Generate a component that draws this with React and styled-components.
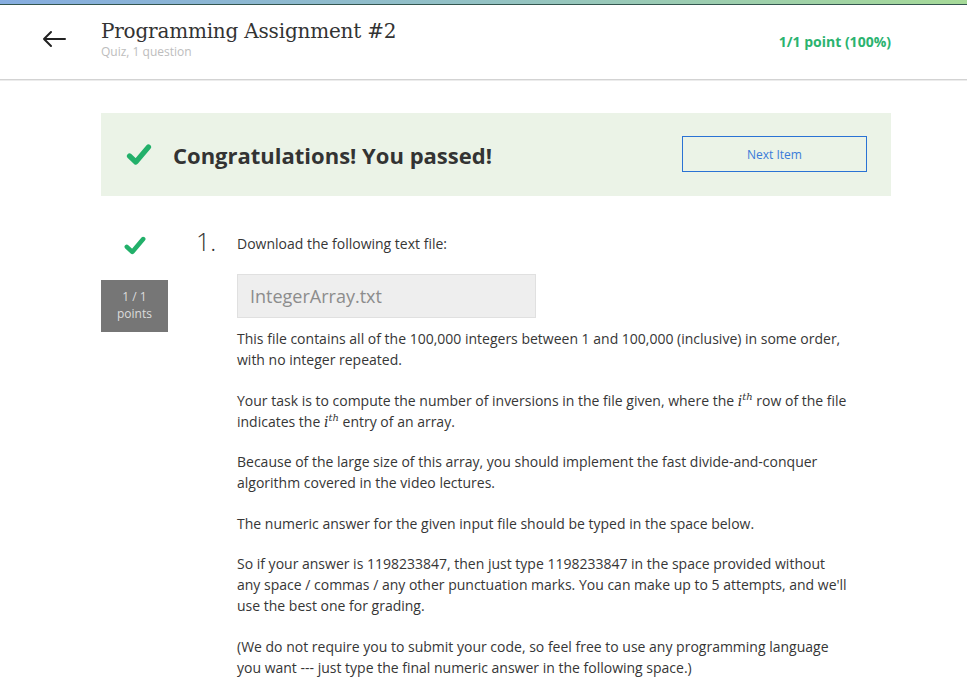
import styled, { createGlobalStyle } from "styled-components";

const GlobalStyle = createGlobalStyle`
  body {
    margin: 0;
    background: #fff;
    font-family: "Open Sans", "Liberation Sans", sans-serif;
    color: #333;
  }
`;

const CheckIcon = ({ width, height }) => (
  <svg width={width} height={height} viewBox="0 0 26 22" aria-hidden="true">
    <path
      d="M3.5 12.5 L9.8 18.5 L22.5 3.5"
      fill="none"
      stroke="#22b06a"
      strokeWidth="5.2"
      strokeLinecap="round"
      strokeLinejoin="round"
    />
  </svg>
);

const BackArrow = () => (
  <svg width="26" height="18" viewBox="0 0 26 18" aria-hidden="true">
    <path
      d="M24 9H3 M10 2 L3 9 L10 16"
      fill="none"
      stroke="#222"
      strokeWidth="2"
      strokeLinecap="round"
      strokeLinejoin="round"
    />
  </svg>
);

const Ith = () => (
  <MathI>
    i<sup>th</sup>
  </MathI>
);

const App = () => {
  return (
    <>
      <GlobalStyle />
      <TopBar />
      <Header>
        <BackButton aria-label="Back">
          <BackArrow />
        </BackButton>
        <TitleBlock>
          <Title>Programming Assignment #2</Title>
          <Subtitle>Quiz, 1 question</Subtitle>
        </TitleBlock>
        <Score>1/1 point (100%)</Score>
      </Header>

      <Main>
        <Banner>
          <CheckIcon width={26} height={23} />
          <BannerText>Congratulations! You passed!</BannerText>
          <NextButton>Next Item</NextButton>
        </Banner>

        <Question>
          <Status>
            <CheckIcon width={24} height={19} />
            <Points>
              1 / 1
              <br />
              points
            </Points>
          </Status>
          <Number>1.</Number>
          <Body>
            <Prompt>Download the following text file:</Prompt>
            <FileBox>IntegerArray.txt</FileBox>
            <Para>
              This file contains all of the 100,000 integers between 1 and
              100,000 (inclusive) in some order, with no integer repeated.
            </Para>
            <Para>
              Your task is to compute the number of inversions in the file
              given, where the <Ith /> row of the file indicates the <Ith />{" "}
              entry of an array.
            </Para>
            <Para>
              Because of the large size of this array, you should implement the
              fast divide-and-conquer algorithm covered in the video lectures.
            </Para>
            <Para>
              The numeric answer for the given input file should be typed in
              the space below.
            </Para>
            <Para>
              So if your answer is 1198233847, then just type 1198233847 in the
              space provided without any space / commas / any other punctuation
              marks. You can make up to 5 attempts, and we'll use the best one
              for grading.
            </Para>
            <Para>
              (We do not require you to submit your code, so feel free to use
              any programming language you want --- just type the final numeric
              answer in the following space.)
            </Para>
          </Body>
        </Question>
      </Main>
    </>
  );
};

const TopBar = styled.div`
  height: 4px;
  background: linear-gradient(90deg, #86ade0 0%, #93c2c4 50%, #a6da98 100%);
  border-bottom: 1px solid #34564f;
`;

const Header = styled.header`
  height: 74px;
  display: flex;
  align-items: center;
  padding: 0 76px 0 41px;
  border-bottom: 1px solid #d3d3d3;
  box-shadow: 0 1px 0 #ececec;
`;

const BackButton = styled.div`
  width: 60px;
  display: flex;
  align-items: center;
  margin-top: -7px;
`;

const TitleBlock = styled.div`
  flex: 1;
  display: flex;
  flex-direction: column;
  margin-top: -7px;
`;

const Title = styled.h1`
  margin: 0;
  font-family: "DejaVu Serif", "Liberation Serif", serif;
  font-weight: normal;
  font-size: 20px;
  line-height: 26px;
  color: #333;
  letter-spacing: -0.2px;
`;

const Subtitle = styled.div`
  font-size: 12px;
  line-height: 16px;
  color: #bdbdbd;
`;

const Score = styled.div`
  font-size: 14px;
  font-weight: 700;
  color: #2bb36f;
  margin-top: -1px;
`;

const Main = styled.main`
  width: 790px;
  margin: 0 0 0 101px;
  padding-top: 33px;
`;

const Banner = styled.section`
  height: 83px;
  box-sizing: border-box;
  display: flex;
  align-items: center;
  padding: 0 24px 0 25px;
  background: #ebf3e7;
`;

const BannerText = styled.h2`
  flex: 1;
  margin: 0 0 0 21px;
  font-size: 22px;
  font-weight: 700;
  color: #333;
`;

const NextButton = styled.button`
  width: 185px;
  height: 36px;
  margin-top: -1px;
  background: transparent;
  border: 1px solid #2a72d4;
  color: #3a7bd9;
  font-family: "Open Sans", "Liberation Sans", sans-serif;
  font-size: 12px;
  cursor: pointer;
`;

const Question = styled.section`
  display: grid;
  grid-template-columns: 95px 41px 1fr;
  margin-top: 37px;
`;

const Status = styled.div`
  width: 67px;
  display: flex;
  flex-direction: column;
  align-items: center;
  padding-top: 3px;
`;

const Points = styled.div`
  width: 67px;
  height: 52px;
  margin-top: 25px;
  box-sizing: border-box;
  padding-top: 8px;
  background: #767676;
  color: #dcdcdc;
  font-size: 12px;
  line-height: 17px;
  text-align: center;
`;

const Number = styled.div`
  font-size: 25px;
  font-weight: 300;
  line-height: 21px;
  margin-top: -2px;
  color: #333;
`;

const Body = styled.div`
  width: 614px;
  font-size: 14px;
  line-height: 21px;
  color: #363636;
`;

const Prompt = styled.p`
  margin: 0;
`;

const FileBox = styled.div`
  width: 299px;
  height: 44px;
  box-sizing: border-box;
  margin-top: 20px;
  padding: 0 12px;
  display: flex;
  align-items: center;
  background: #eeeeee;
  border: 1px solid #e0e0e0;
  font-size: 18px;
  color: #8c8c8c;
`;

const Para = styled.p`
  margin: 10px 0 19.5px;

  & + & {
    margin-top: 0;
  }
`;

const MathI = styled.span`
  font-family: "DejaVu Serif", "Liberation Serif", serif;
  font-style: italic;
  font-size: 14px;
  line-height: 0;

  sup {
    font-size: 10px;
    vertical-align: 6px;
    line-height: 0;
  }
`;

export default App;
